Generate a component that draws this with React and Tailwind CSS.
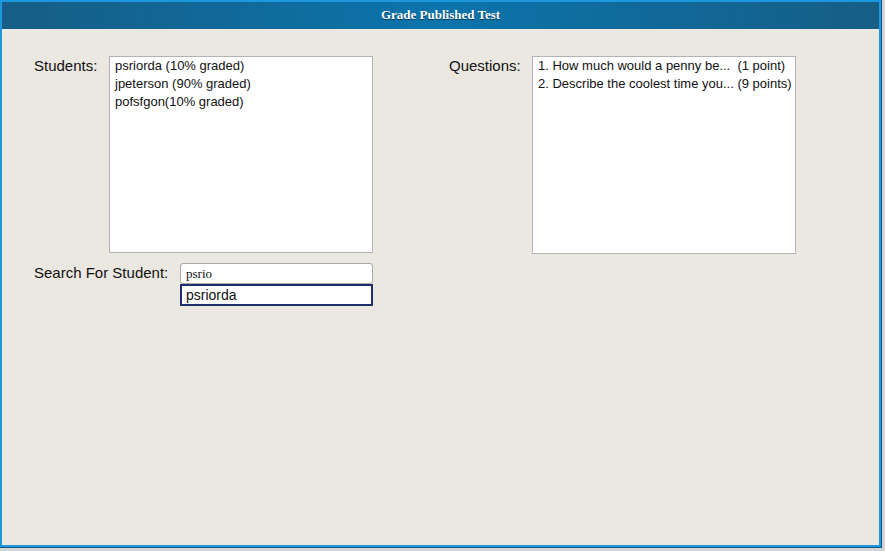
import React from "react";

const students = [
  "psriorda (10% graded)",
  "jpeterson (90% graded)",
  "pofsfgon(10% graded)",
];

const questions = [
  "1. How much would a penny be...  (1 point)",
  "2. Describe the coolest time you... (9 points)",
];

/* ─── List box ───────────────────────────────────────────────────────── */
const ListBox = ({ items, className = "" }) => (
  <div
    className={`bg-white border border-[#b3b3b3] px-[5px] text-[13px] leading-[18px] text-[#111] whitespace-pre ${className}`}
  >
    {items.map((item) => (
      <div key={item}>{item}</div>
    ))}
  </div>
);

export default function App() {
  return (
    <div className="w-[885px] h-[551px] bg-[#d4d4d4] font-['Liberation_Sans',Arial,sans-serif]">
      <div className="w-[882px] h-[548px] bg-[#0d5a86] pr-[1px] pb-[1px]">
        <div className="flex flex-col w-full h-full border-2 border-[#1c97e0] bg-[#ebe8e2]">
          {/* ── Title bar ─────────────────────────────────────────────── */}
          <div className="h-[27px] shrink-0 flex items-center justify-center bg-[linear-gradient(90deg,#165e86_0%,#0c74ac_50%,#165e86_100%)]">
            <span className="text-white text-[13px] font-bold font-['Liberation_Serif','Times_New_Roman',serif] [text-shadow:0_1px_1px_rgba(0,0,0,0.5)] -mt-[2px]">
              Grade Published Test
            </span>
          </div>

          {/* ── Body ──────────────────────────────────────────────────── */}
          <div className="flex-1 pt-[27px] pl-[32px] text-[15px] text-[#111]">
            <div className="flex items-start">
              <div className="w-[75px] pt-[1px] leading-[17px]">Students:</div>
              <ListBox items={students} className="w-[264px] h-[197px]" />
              <div className="w-[83px] ml-[76px] pt-[1px] leading-[17px]">Questions:</div>
              <ListBox items={questions} className="w-[264px] h-[198px]" />
            </div>

            <div className="flex items-start mt-[9px]">
              <div className="w-[146px] pt-[1px] leading-[17px]">Search For Student:</div>
              <div className="flex flex-col w-[193px]">
                <div className="h-[21px] bg-white border border-[#a9a9a9] rounded-[3px] px-[5px] flex items-center text-[13px] font-['Liberation_Serif','Times_New_Roman',serif]">
                  psrio
                </div>
                <div className="h-[22px] bg-white border-2 border-[#1f2f6e] px-[4px] flex items-center text-[14px]">
                  psriorda
                </div>
              </div>
            </div>
          </div>
        </div>
      </div>
    </div>
  );
}
